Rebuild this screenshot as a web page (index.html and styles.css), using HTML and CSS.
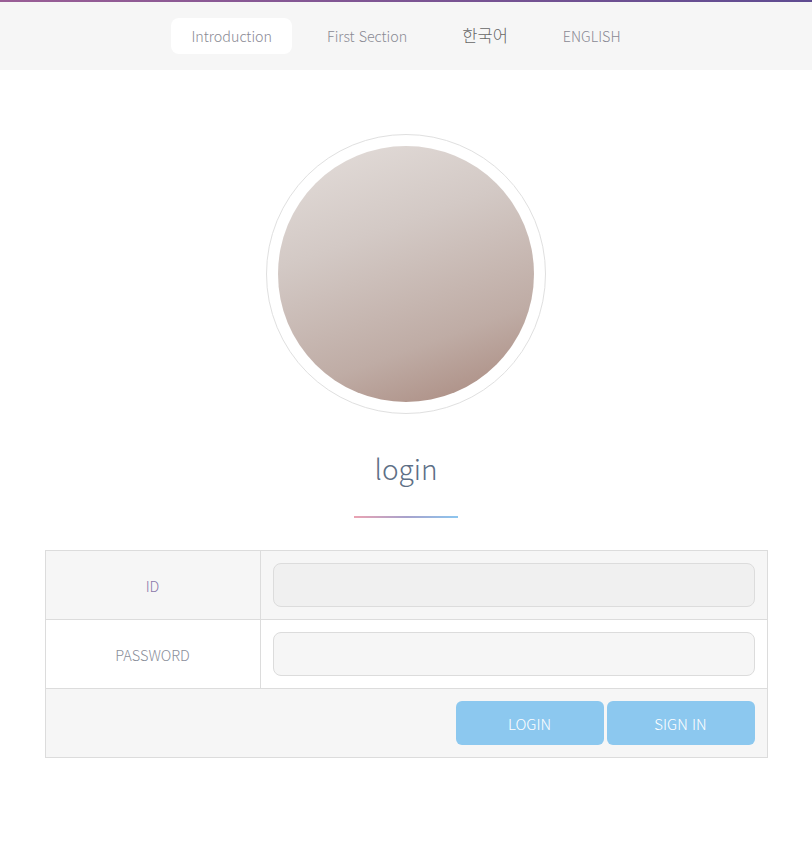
FILE: index.html
```html
<!DOCTYPE html>
<html lang="ko">

<head>
  <meta charset="UTF-8" />
  <meta name="viewport" content="width=device-width, initial-scale=1.0" />
  <title>login</title>
  <link rel="stylesheet" href="styles.css">
</head>

<body>
  <nav class="top-nav">
    <a class="nav-item active" href="#">Introduction</a>
    <a class="nav-item" href="#">First Section</a>
    <a class="nav-item lang" href="#">한국어</a>
    <a class="nav-item" href="#">ENGLISH</a>
  </nav>

  <main class="login-box">
    <div class="profile">
      <div class="profile-img"></div>
    </div>

    <h1 class="title">login</h1>
    <div class="title-line"></div>

    <table class="login-table">
      <tr class="gray">
        <th>ID</th>
        <td><input type="text" class="input-id" /></td>
      </tr>
      <tr>
        <th class="pw">PASSWORD</th>
        <td><input type="password" class="input-pw" /></td>
      </tr>
      <tr class="gray">
        <td colspan="2">
          <div class="btn-row">
            <button type="button">LOGIN</button>
            <button type="button">SIGN IN</button>
          </div>
        </td>
      </tr>
    </table>
  </main>
</body>

</html>
```

FILE: styles.css
```css
body {
  margin: 0;
  font-family: "Noto Sans CJK KR", "Noto Sans", sans-serif;
  font-weight: 300;
  background: #fff;
  color: #888;
}

/* menu atas */
.top-nav {
  height: 68px;
  background: #f6f6f6;
  border-top: 2px solid #7d5595;
  border-image: linear-gradient(to right, #9a5e96, #5f4c91) 1;
  display: flex;
  justify-content: center;
  align-items: center;
  gap: 15px;
}

.nav-item {
  padding: 7px 20px;
  border-radius: 8px;
  font-size: 14.3px;
  line-height: 22px;
  color: #8a8a94;
  text-decoration: none;
}

.nav-item.active {
  background: #fff;
}

.nav-item.lang {
  font-size: 16.5px;
  color: #666;
  margin-top: -2px;
}

.login-box {
  width: 723px;
  margin: 0 auto;
  text-align: center;
}

.profile {
  width: 256px;
  height: 256px;
  margin: 64px auto 0;
  padding: 11px;
  border: 1px solid #e0e0e0;
  border-radius: 50%;
}

.profile-img {
  width: 100%;
  height: 100%;
  border-radius: 50%;
  background: linear-gradient(160deg, #e4dedb 0%, #d3c9c5 35%, #bfaca5 72%, #a7867b 100%);
}

.title {
  margin: 32px 0 0;
  font-size: 28px;
  font-weight: 300;
  line-height: 44px;
  color: #5d6f86;
}

.title-line {
  width: 104px;
  height: 2px;
  margin: 26px auto 0;
  background: linear-gradient(to right, #eba3b2, #a8a2cc, #8cc6ef);
}

.login-table {
  width: 100%;
  margin-top: 32px;
  border-collapse: collapse;
}

.login-table th,
.login-table td {
  border: 1px solid #dcdcdc;
  height: 44px;
  padding: 12px;
}

.login-table th {
  width: 190px;
  font-size: 14.5px;
  font-weight: 300;
  color: #8a78aa;
}

.login-table th.pw {
  color: #8a8e9a;
}

.gray {
  background: #f6f6f6;
}

input {
  display: block;
  width: 100%;
  height: 44px;
  box-sizing: border-box;
  border: 1px solid #dcdcdc;
  border-radius: 8px;
  background: #f6f6f6;
}

.input-id {
  background: #f0f0f0;
}

.btn-row {
  display: flex;
  justify-content: flex-end;
  gap: 3px;
}

.btn-row button {
  width: 148px;
  height: 44px;
  border: none;
  border-radius: 6px;
  background: #8cc8ef;
  color: #fff;
  font-family: inherit;
  font-size: 15px;
  font-weight: 300;
  cursor: pointer;
}
```
